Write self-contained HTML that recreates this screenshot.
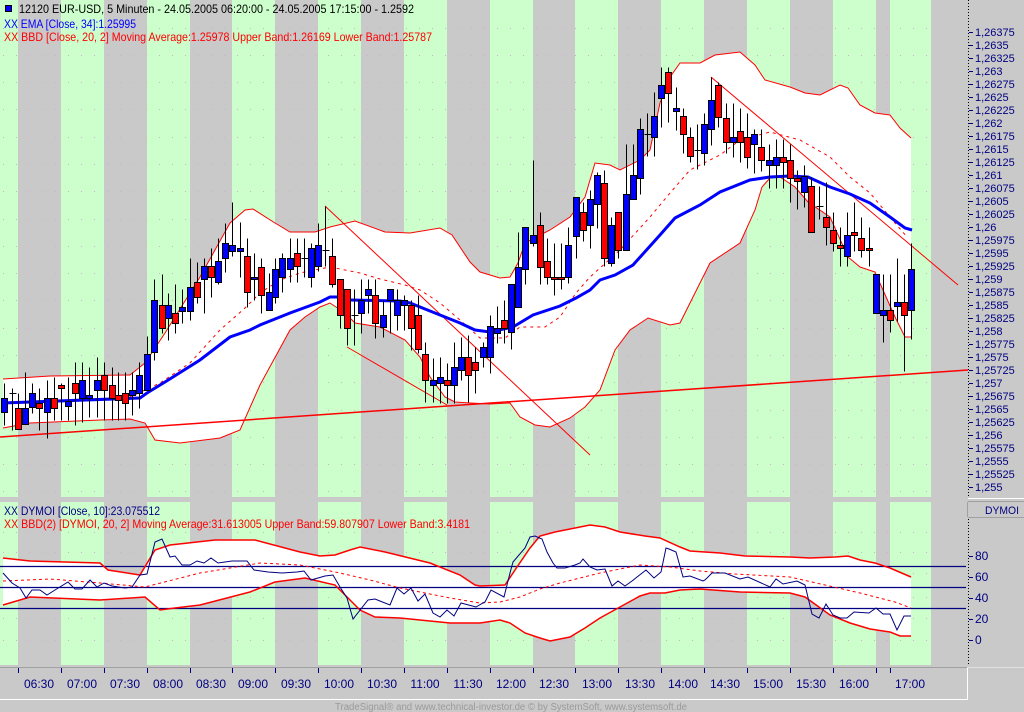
<!DOCTYPE html>
<html><head><meta charset="utf-8"><style>
html,body{margin:0;padding:0;background:#c9c9c9;}
svg{display:block;font-family:"Liberation Sans",sans-serif;}
</style></head><body>
<svg width="1024" height="712" viewBox="0 0 1024 712" xmlns="http://www.w3.org/2000/svg">
<rect x="0" y="0" width="1024" height="712" fill="#c9c9c9"/>
<rect x="0" y="0" width="931" height="497" fill="#ccffcc"/>
<rect x="0" y="502" width="931" height="163" fill="#ccffcc"/>
<g fill="#c9c9c9">
<rect x="18" y="0" width="43" height="665"/><rect x="104" y="0" width="43" height="665"/><rect x="190" y="0" width="42" height="665"/><rect x="275" y="0" width="43" height="665"/><rect x="361" y="0" width="43" height="665"/><rect x="447" y="0" width="43" height="665"/><rect x="533" y="0" width="42" height="665"/><rect x="618" y="0" width="43" height="665"/><rect x="704" y="0" width="43" height="665"/><rect x="790" y="0" width="43" height="665"/><rect x="876" y="0" width="14" height="665"/><rect x="931" y="0" width="37" height="665"/>
<rect x="0" y="497" width="968" height="5"/>
</g>
<g stroke="#d0b0d0" stroke-width="1" stroke-dasharray="1 12">
<path d="M3 28.5H931M3 55.5H931M3 82.5H931M3 109.5H931M3 137.5H931M3 164.5H931M3 191.5H931M3 219.5H931M3 246.5H931M3 273.5H931M3 300.5H931M3 328.5H931M3 355.5H931M3 382.5H931M3 410.5H931M3 437.5H931M3 464.5H931M3 491.5H931"/>
<path d="M3 532.5H931M3 552.5H931M3 573.5H931M3 597.5H931M3 618.5H931M3 640.5H931"/>
</g>
<polygon fill="#fff" points="3,379 50,376 130,375 145,363 165,333 200,277 230,223 245,210 253,209 275,223 290,232 315,232 330,227 355,221 385,232 410,233 440,228 452,235 470,262 480,272 500,278 510,277 518,263 525,243 550,230 570,217 585,197 595,163 610,165 620,170 640,160 650,150 660,103 670,77 680,63 700,63 715,55 740,52 755,65 765,80 790,87 805,93 820,95 840,85 848,88 860,105 875,113 890,115 900,128 911,138 911,337 905,337 895,317 875,272 860,267 848,257 830,217 808,202 795,187 780,177 770,178 762,187 755,210 740,243 710,263 700,283 680,323 670,325 648,318 630,330 615,350 600,390 585,407 570,418 550,427 535,425 520,417 510,403 490,404 470,403 455,402 445,397 430,377 420,357 405,340 380,327 355,323 345,313 330,303 320,307 305,317 290,330 260,385 240,430 220,438 180,443 155,440 145,423 130,419 100,420 30,423 3,428"/>
<g fill="none" stroke="#ff0000" stroke-width="1">
<polyline points="3,379 50,376 130,375 145,363 165,333 200,277 230,223 245,210 253,209 275,223 290,232 315,232 330,227 355,221 385,232 410,233 440,228 452,235 470,262 480,272 500,278 510,277 518,263 525,243 550,230 570,217 585,197 595,163 610,165 620,170 640,160 650,150 660,103 670,77 680,63 700,63 715,55 740,52 755,65 765,80 790,87 805,93 820,95 840,85 848,88 860,105 875,113 890,115 900,128 911,138"/>
<polyline points="3,428 30,423 100,420 130,419 145,423 155,440 180,443 220,438 240,430 260,385 290,330 305,317 320,307 330,303 345,313 355,323 380,327 405,340 420,357 430,377 445,397 455,402 470,403 490,404 510,403 520,417 535,425 550,427 570,418 585,407 600,390 615,350 630,330 648,318 670,325 680,323 700,283 710,263 740,243 755,210 762,187 770,178 780,177 795,187 808,202 830,217 848,257 860,267 875,272 895,317 905,337 911,337"/>
<polyline stroke-dasharray="3 4" points="3,402 100,400 130,397 160,383 190,363 220,330 245,308 260,293 280,280 300,273 330,267 360,273 380,279 405,285 420,290 440,303 460,320 480,338 505,338 520,327 545,327 560,317 576,293 590,277 620,250 650,217 670,193 690,170 720,155 740,140 770,132 800,140 830,157 850,177 870,193 890,217 907,237"/>
<path d="M325 206L590 455M347 347L447 405M711 77L958 285"/>
<path d="M0 437L968 370" stroke-width="1.5"/>
</g>
<polyline fill="none" stroke="#0000ff" stroke-width="3" points="3,403 140,398 147,393 165,382 200,360 230,337 250,330 260,325 290,313 320,302 330,297 340,297 350,300 400,301 410,303 420,307 440,315 460,323 475,330 490,332 513,327 533,315 560,306 576,298 590,290 600,280 615,275 633,265 660,235 675,218 700,205 720,192 750,180 770,177 790,176 808,177 830,187 850,194 870,203 890,217 905,228 912,230"/>
<g transform="translate(0.5,0.5)" shape-rendering="crispEdges" stroke="#000" stroke-width="1">
<path fill="none" d="M4 383V425M12 388V430M18 393V429M25 372V424M32 383V413M39 388V430M47 380V438M54 377V420M61 383V420M68 377V420M75 362V425M82 362V422M89 367V417M97 357V417M104 362V420M112 367V420M118 372V420M125 372V420M132 372V415M139 362V408M147 336V390M154 279V360M162 274V333M168 293V340M175 284V333M182 289V323M190 258V320M197 262V303M204 258V313M211 248V297M218 238V284M225 223V272M232 202V256M240 222V277M247 238V307M254 253V300M261 258V313M269 273V310M275 258V303M282 253V292M290 238V282M297 238V282M304 238V277M311 243V287M318 223V271M325 206V266M332 238V287M340 279V328M347 289V345M354 289V345M361 279V333M368 279V313M375 279V338M383 300V337M390 289V333M397 289V330M404 295V330M411 300V350M418 295V353M425 342V402M433 358V402M440 357V403M447 363V403M454 342V403M461 337V380M468 335V402M475 347V393M483 342V367M490 315V373M497 306V343M504 300V343M511 284V349M518 232V307M525 227V284M533 160V246M540 212V284M547 238V284M554 243V295M561 243V289M568 227V283M576 197V258M583 202V241M590 190V248M597 172V228M604 170V266M611 217V266M618 212V258M626 144V250M633 144V199M640 118V194M647 113V156M654 92V156M661 67V127M668 67V122M676 87V130M683 108V153M690 127V162M697 124V169M704 113V165M711 77V145M718 82V127M726 103V153M733 103V157M740 108V162M747 113V168M754 129V173M761 129V171M769 144V188M776 139V188M783 139V188M790 144V202M797 170V209M804 165V207M811 177V232M819 186V219M826 182V245M833 212V251M840 227V266M847 212V266M854 202V251M861 217V257M869 227V266M876 274V313M883 274V342M890 274V332M897 258V321M904 274V371M911 243V339"/>
<path fill="none" d="M9 393h7M301 258h7M322 250h7M351 315h7M644 134h7M694 150h7M816 206h7"/>
<g fill="#0000ff">
<rect x="1" y="398" width="6" height="14"/><rect x="22" y="408" width="6" height="16"/><rect x="29" y="393" width="6" height="14"/><rect x="44" y="398" width="6" height="14"/><rect x="65" y="401" width="6" height="5"/><rect x="79" y="380" width="6" height="18"/><rect x="86" y="395" width="6" height="3"/><rect x="94" y="380" width="6" height="10"/><rect x="129" y="390" width="6" height="5"/><rect x="136" y="375" width="6" height="18"/><rect x="144" y="354" width="6" height="36"/><rect x="151" y="300" width="6" height="52"/><rect x="165" y="305" width="6" height="13"/><rect x="179" y="307" width="6" height="4"/><rect x="187" y="287" width="6" height="24"/><rect x="201" y="266" width="6" height="13"/><rect x="215" y="261" width="6" height="21"/><rect x="222" y="243" width="6" height="15"/><rect x="229" y="245" width="6" height="6"/><rect x="237" y="248" width="6" height="3"/><rect x="251" y="277" width="6" height="2"/><rect x="266" y="292" width="6" height="18"/><rect x="272" y="269" width="6" height="28"/><rect x="279" y="258" width="6" height="19"/><rect x="287" y="258" width="6" height="11"/><rect x="308" y="248" width="6" height="29"/><rect x="315" y="245" width="6" height="21"/><rect x="358" y="300" width="6" height="13"/><rect x="365" y="289" width="6" height="6"/><rect x="380" y="315" width="6" height="12"/><rect x="387" y="289" width="6" height="11"/><rect x="394" y="300" width="6" height="15"/><rect x="401" y="300" width="6" height="5"/><rect x="430" y="380" width="6" height="5"/><rect x="437" y="377" width="6" height="6"/><rect x="451" y="367" width="6" height="18"/><rect x="458" y="357" width="6" height="13"/><rect x="480" y="347" width="6" height="10"/><rect x="487" y="326" width="6" height="31"/><rect x="494" y="328" width="6" height="5"/><rect x="508" y="284" width="6" height="48"/><rect x="515" y="267" width="6" height="40"/><rect x="522" y="227" width="6" height="42"/><rect x="530" y="235" width="6" height="8"/><rect x="565" y="245" width="6" height="32"/><rect x="573" y="197" width="6" height="39"/><rect x="587" y="199" width="6" height="26"/><rect x="594" y="175" width="6" height="29"/><rect x="608" y="225" width="6" height="38"/><rect x="623" y="194" width="6" height="56"/><rect x="630" y="175" width="6" height="24"/><rect x="637" y="129" width="6" height="49"/><rect x="651" y="116" width="6" height="21"/><rect x="658" y="85" width="6" height="13"/><rect x="673" y="108" width="6" height="3"/><rect x="701" y="124" width="6" height="29"/><rect x="708" y="100" width="6" height="29"/><rect x="730" y="137" width="6" height="5"/><rect x="751" y="134" width="6" height="10"/><rect x="766" y="160" width="6" height="5"/><rect x="773" y="157" width="6" height="8"/><rect x="801" y="176" width="6" height="16"/><rect x="844" y="235" width="6" height="21"/><rect x="873" y="274" width="6" height="39"/><rect x="880" y="310" width="6" height="5"/><rect x="894" y="302" width="6" height="4"/><rect x="908" y="269" width="6" height="41"/>
</g>
<g fill="#ff0000">
<rect x="15" y="408" width="6" height="21"/><rect x="36" y="403" width="6" height="5"/><rect x="51" y="398" width="6" height="10"/><rect x="58" y="385" width="6" height="3"/><rect x="72" y="383" width="6" height="10"/><rect x="101" y="375" width="6" height="15"/><rect x="109" y="385" width="6" height="13"/><rect x="115" y="395" width="6" height="5"/><rect x="122" y="393" width="6" height="10"/><rect x="159" y="305" width="6" height="23"/><rect x="172" y="313" width="6" height="10"/><rect x="194" y="282" width="6" height="15"/><rect x="208" y="266" width="6" height="11"/><rect x="244" y="256" width="6" height="36"/><rect x="258" y="267" width="6" height="28"/><rect x="294" y="253" width="6" height="13"/><rect x="329" y="256" width="6" height="28"/><rect x="337" y="279" width="6" height="36"/><rect x="344" y="289" width="6" height="39"/><rect x="372" y="295" width="6" height="28"/><rect x="408" y="305" width="6" height="23"/><rect x="415" y="315" width="6" height="34"/><rect x="422" y="354" width="6" height="26"/><rect x="444" y="380" width="6" height="5"/><rect x="465" y="357" width="6" height="18"/><rect x="472" y="362" width="6" height="8"/><rect x="501" y="320" width="6" height="8"/><rect x="537" y="225" width="6" height="42"/><rect x="544" y="261" width="6" height="16"/><rect x="551" y="277" width="6" height="2"/><rect x="558" y="277" width="6" height="2"/><rect x="580" y="212" width="6" height="18"/><rect x="601" y="183" width="6" height="75"/><rect x="615" y="212" width="6" height="38"/><rect x="665" y="72" width="6" height="21"/><rect x="680" y="116" width="6" height="18"/><rect x="687" y="137" width="6" height="19"/><rect x="715" y="85" width="6" height="32"/><rect x="723" y="118" width="6" height="24"/><rect x="737" y="131" width="6" height="11"/><rect x="744" y="137" width="6" height="20"/><rect x="758" y="147" width="6" height="13"/><rect x="780" y="157" width="6" height="5"/><rect x="787" y="160" width="6" height="18"/><rect x="794" y="178" width="6" height="3"/><rect x="808" y="186" width="6" height="46"/><rect x="823" y="217" width="6" height="10"/><rect x="830" y="230" width="6" height="13"/><rect x="837" y="245" width="6" height="3"/><rect x="851" y="232" width="6" height="3"/><rect x="858" y="238" width="6" height="12"/><rect x="866" y="248" width="6" height="2"/><rect x="887" y="310" width="6" height="10"/><rect x="901" y="302" width="6" height="13"/>
</g>
</g>
<rect x="5.5" y="5.5" width="6" height="6" fill="#0000ff" stroke="#000"/>
<text x="19" y="13" font-size="12" fill="#000" textLength="395" lengthAdjust="spacingAndGlyphs">12120  EUR-USD, 5 Minuten - 24.05.2005 06:20:00 - 24.05.2005 17:15:00 - 1.2592</text>
<text x="4" y="28" font-size="12" fill="#0000ff" textLength="132" lengthAdjust="spacingAndGlyphs">XX EMA [Close, 34]:1.25995</text>
<text x="4" y="41" font-size="12" fill="#ff0000" textLength="428" lengthAdjust="spacingAndGlyphs">XX BBD [Close, 20, 2] Moving Average:1.25978 Upper Band:1.26169 Lower Band:1.25787</text>
<polygon fill="#fff" points="3,558 30,561 100,563 108,570 140,575 155,550 170,545 215,540 255,540 300,552 320,556 335,555 350,550 360,547 385,552 430,563 460,575 475,585 480,586 505,585 515,570 530,548 540,536 555,532 580,527 590,525 605,527 620,532 645,536 660,538 680,547 690,551 720,553 745,556 790,557 810,558 835,557 848,556 860,560 875,563 890,568 911,577 911,636 900,636 890,632 870,629 850,623 830,615 805,597 790,593 740,592 700,589 680,590 665,593 650,593 640,596 620,607 600,618 585,628 570,637 560,639 550,641 540,638 525,633 510,623 500,620 480,623 450,623 400,618 375,617 360,610 350,600 335,585 305,578 275,582 250,592 200,605 175,608 160,610 145,597 100,600 30,597 3,605"/>
<path d="M0 566.5H966M0 587.5H966M0 608.5H966" stroke="#000080" stroke-width="1.2"/>
<g fill="none" stroke="#ff0000">
<polyline stroke-width="1.5" points="3,558 30,561 100,563 108,570 140,575 155,550 170,545 215,540 255,540 300,552 320,556 335,555 350,550 360,547 385,552 430,563 460,575 475,585 480,586 505,585 515,570 530,548 540,536 555,532 580,527 590,525 605,527 620,532 645,536 660,538 680,547 690,551 720,553 745,556 790,557 810,558 835,557 848,556 860,560 875,563 890,568 911,577"/>
<polyline stroke-width="1.5" points="3,605 30,597 100,600 145,597 160,610 175,608 200,605 250,592 275,582 305,578 335,585 350,600 360,610 375,617 400,618 450,623 480,623 500,620 510,623 525,633 540,638 550,641 560,639 570,637 585,628 600,618 620,607 640,596 650,593 665,593 680,590 700,589 740,592 790,593 805,597 830,615 850,623 870,629 890,632 900,636 911,636"/>
<polyline stroke-width="1" stroke-dasharray="3 3" points="3,581 50,579 100,583 145,587 200,573 260,563 300,565 340,573 370,580 400,588 450,598 480,603 500,602 520,597 540,589 560,583 580,578 600,573 620,569 640,565 670,567 700,571 735,574 790,577 825,585 860,593 895,602 911,608"/>
</g>
<polyline fill="none" stroke="#000080" stroke-width="1" points="3,573 12,583 20,588 26,598 32,590 40,590 47,595 55,590 68,582 75,589 82,589 90,580 97,587 104,583 112,586 125,588 132,587 140,575 147,574 155,542 162,539 170,557 175,556 182,565 190,565 197,561 204,563 211,558 218,563 232,561 247,561 254,570 268,572 282,573 297,572 304,571 311,580 325,576 333,575 340,587 347,598 353,619 368,600 375,599 390,605 397,588 404,594 411,588 418,601 425,594 433,613 440,617 447,610 454,616 461,603 476,607 483,603 485,602 491,590 504,597 510,573 513,562 525,548 530,537 535,536 542,539 547,552 553,563 557,568 565,568 575,565 580,563 583,559 590,567 597,570 605,569 612,586 618,581 625,586 632,581 646,570 654,578 661,572 666,548 669,549 676,552 683,577 690,576 703,581 705,580 712,573 725,573 740,579 748,577 770,587 776,579 783,584 797,581 805,585 812,614 819,618 826,604 833,615 840,618 847,618 854,612 869,613 876,608 883,614 890,614 897,630 904,616 911,616"/>
<text x="4" y="515" font-size="12" fill="#000080" textLength="156" lengthAdjust="spacingAndGlyphs">XX DYMOI [Close, 10]:23.075512</text>
<text x="4" y="528" font-size="12" fill="#ff0000" textLength="466" lengthAdjust="spacingAndGlyphs">XX BBD(2) [DYMOI, 20, 2] Moving Average:31.613005 Upper Band:59.807907 Lower Band:3.4181</text>
<path d="M968.5 0V497M968.5 519V665" stroke="#000" stroke-dasharray="1 2"/>
<path d="M968 498.5H1024" stroke="#fff"/>
<path d="M968 501.5H1024M968 517.5H1024" stroke="#a0a0a0"/>
<path d="M967.5 502V517" stroke="#a0a0a0"/>
<text x="985" y="514" font-size="11" fill="#000080" textLength="34" lengthAdjust="spacingAndGlyphs">DYMOI</text>
<g stroke="#000080">
<path d="M969 32.5h4M969 45.5h4M969 58.5h4M969 71.5h4M969 84.5h4M969 97.5h4M969 110.5h4M969 123.5h4M969 136.5h4M969 149.5h4M969 162.5h4M969 175.5h4M969 188.5h4M969 201.5h4M969 214.5h4M969 227.5h4M969 240.5h4M969 253.5h4M969 266.5h4M969 279.5h4M969 292.5h4M969 305.5h4M969 318.5h4M969 331.5h4M969 344.5h4M969 357.5h4M969 370.5h4M969 383.5h4M969 396.5h4M969 409.5h4M969 422.5h4M969 435.5h4M969 448.5h4M969 461.5h4M969 474.5h4M969 487.5h4M969 556.5h4M969 577.5h4M969 598.5h4M969 619.5h4M969 640.5h4"/>
</g>
<g font-size="11" fill="#000080">
<text x="975" y="36">1,26375</text><text x="975" y="49">1,2635</text><text x="975" y="62">1,26325</text><text x="975" y="75">1,263</text><text x="975" y="88">1,26275</text><text x="975" y="101">1,2625</text><text x="975" y="114">1,26225</text><text x="975" y="127">1,262</text><text x="975" y="140">1,26175</text><text x="975" y="153">1,2615</text><text x="975" y="166">1,26125</text><text x="975" y="179">1,261</text><text x="975" y="192">1,26075</text><text x="975" y="205">1,2605</text><text x="975" y="218">1,26025</text><text x="975" y="231">1,26</text><text x="975" y="244">1,25975</text><text x="975" y="257">1,2595</text><text x="975" y="270">1,25925</text><text x="975" y="283">1,259</text><text x="975" y="296">1,25875</text><text x="975" y="309">1,2585</text><text x="975" y="322">1,25825</text><text x="975" y="335">1,258</text><text x="975" y="348">1,25775</text><text x="975" y="361">1,2575</text><text x="975" y="374">1,25725</text><text x="975" y="387">1,257</text><text x="975" y="400">1,25675</text><text x="975" y="413">1,2565</text><text x="975" y="426">1,25625</text><text x="975" y="439">1,256</text><text x="975" y="452">1,25575</text><text x="975" y="465">1,2555</text><text x="975" y="478">1,25525</text><text x="975" y="491">1,255</text>
<text x="975" y="560" font-size="12">80</text><text x="975" y="581" font-size="12">60</text><text x="975" y="602" font-size="12">40</text><text x="975" y="623" font-size="12">20</text><text x="975" y="644" font-size="12">0</text>
</g>
<path d="M0 667.5H967" stroke="#a0a0a0"/>
<path d="M967.5 667V700M0 699.5H968" stroke="#fff"/>
<path d="M967 667.5H1024" stroke="#e0e0e0"/>
<path d="M18.5 668v5M61.5 668v5M104.5 668v5M147.5 668v5M190.5 668v5M232.5 668v5M275.5 668v5M318.5 668v5M361.5 668v5M404.5 668v5M447.5 668v5M490.5 668v5M533.5 668v5M575.5 668v5M618.5 668v5M661.5 668v5M704.5 668v5M747.5 668v5M790.5 668v5M833.5 668v5M876.5 668v5M890.5 668v5" stroke="#000080"/>
<g font-size="12" fill="#000080" text-anchor="middle">
<text x="39" y="688">06:30</text><text x="82" y="688">07:00</text><text x="125" y="688">07:30</text><text x="168" y="688">08:00</text><text x="211" y="688">08:30</text><text x="253" y="688">09:00</text><text x="296" y="688">09:30</text><text x="339" y="688">10:00</text><text x="382" y="688">10:30</text><text x="425" y="688">11:00</text><text x="468" y="688">11:30</text><text x="511" y="688">12:00</text><text x="554" y="688">12:30</text><text x="597" y="688">13:00</text><text x="640" y="688">13:30</text><text x="683" y="688">14:00</text><text x="725" y="688">14:30</text><text x="768" y="688">15:00</text><text x="811" y="688">15:30</text><text x="854" y="688">16:00</text><text x="910" y="688">17:00</text>
</g>
<text x="335" y="710" font-size="10" fill="#9a9a9a" textLength="352" lengthAdjust="spacingAndGlyphs">TradeSignal® and www.technical-investor.de © by SystemSoft, www.systemsoft.de</text>
</svg>
</body></html>
